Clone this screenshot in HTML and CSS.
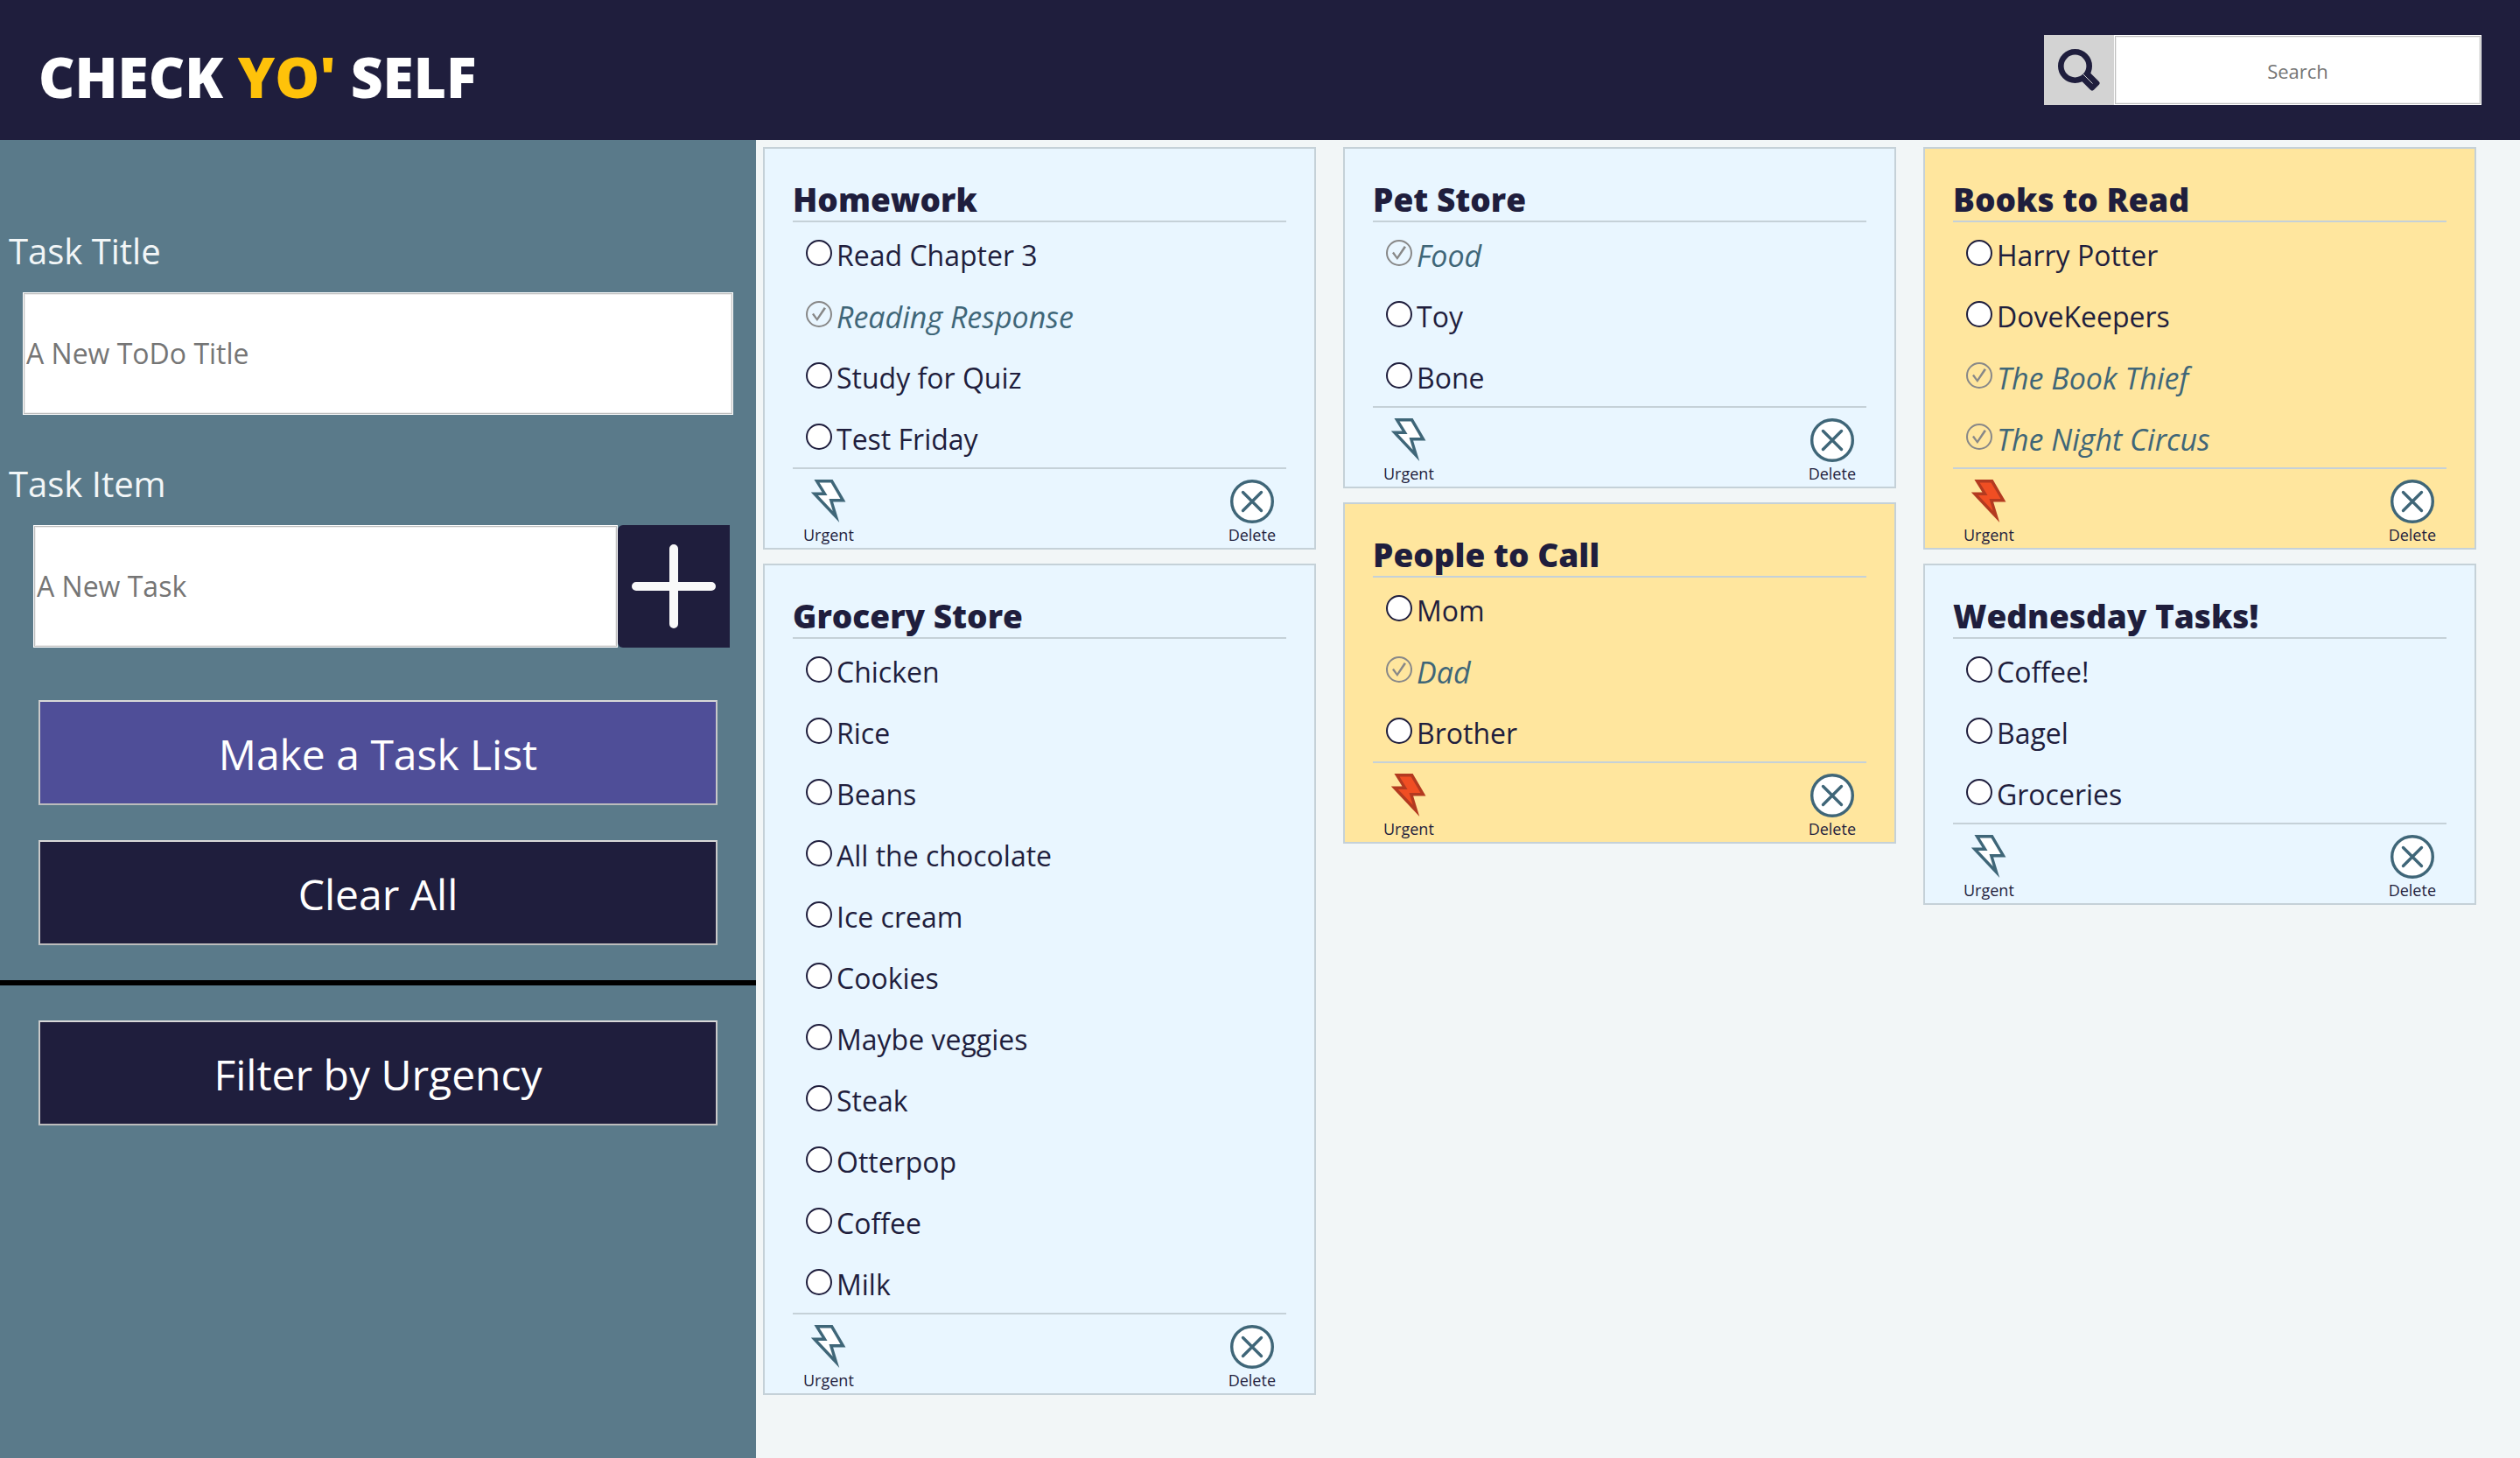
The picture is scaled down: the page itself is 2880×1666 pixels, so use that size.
FILE: index.html
```
<!DOCTYPE html>
<html lang="en">
<head>
<meta charset="utf-8">
<title>Check Yo' Self</title>
<link rel="stylesheet" href="styles.css">
</head>
<body>
<svg class="sprite" aria-hidden="true">
  <symbol id="bolt" viewBox="0 0 40 50">
    <path d="M6.5 1.8H23.6L36.5 23.8H22.8L28.5 42.5L3.8 16.2H15.5Z" stroke-miterlimit="10"/>
  </symbol>
  <symbol id="delete" viewBox="0 0 50 50">
    <circle cx="25" cy="25" r="23.3"/><path d="M14.5 14.5L35.5 35.5M35.5 14.5L14.5 35.5" stroke-linecap="round"/>
  </symbol>
</svg>
<header class="header">
  <h1 class="logo">CHECK <span class="logo-accent">YO'</span> SELF</h1>
  <form class="search">
    <button class="search-button" type="button" aria-label="Search tasks">
      <svg class="search-icon" viewBox="0 0 48 48"><circle cx="19.5" cy="19.5" r="16.2" fill="none" stroke="#1f1e3d" stroke-width="6.6"/><path d="M44.5 39L39 44.5L28 33.5L33.5 28Z" fill="#1f1e3d" stroke="#1f1e3d" stroke-width="6" stroke-linejoin="round"/><path d="M28.5 28.5L39.5 39.5" stroke="#d3d3d3" stroke-width="1"/></svg>
    </button>
    <input class="search-input" type="text" placeholder="Search" aria-label="Search">
  </form>
</header>
<div class="layout">
  <aside class="sidebar">
    <form class="task-form">
      <label class="field-label" for="task-title">Task Title</label>
      <input class="text-input title-input" id="task-title" type="text" placeholder="A New ToDo Title">
      <label class="field-label" for="task-item">Task Item</label>
      <div class="item-row">
        <input class="text-input item-input" id="task-item" type="text" placeholder="A New Task">
        <button class="add-button" type="button" aria-label="Add task">
          <svg class="plus-icon" viewBox="0 0 96 96"><path d="M48 5V91M5 48H91" stroke="#f9f9f9" stroke-width="10" stroke-linecap="round"/></svg>
        </button>
      </div>
      <button class="side-button make-button" type="button">Make a Task List</button>
      <button class="side-button" type="button">Clear All</button>
    </form>
    <div class="filter">
      <button class="side-button" type="button">Filter by Urgency</button>
    </div>
  </aside>
  <main class="board" id="board"></main>
</div>
<script src="app.js"></script>
</body>
</html>
```
FILE: styles.css
```
* {
  box-sizing: border-box;
}

body {
  margin: 0;
  min-height: 100vh;
  display: flex;
  flex-direction: column;
  background: #f2f6f7;
  color: #1f1e3d;
  font-family: "Open Sans", sans-serif;
  font-size: 32px;
}

button,
input {
  font-family: inherit;
  margin: 0;
}

.sprite {
  display: none;
}

.header {
  height: 160px;
  padding: 0 44px;
  display: flex;
  align-items: center;
  justify-content: space-between;
  background: #1f1e3d;
}

.logo {
  margin: 0;
  padding-top: 16px;
  color: #fff;
  font-size: 64px;
  font-weight: 800;
  line-height: 88px;
}

.logo-accent {
  color: #ffc20a;
}

.search {
  display: flex;
  height: 80px;
}

.search-button {
  width: 80px;
  padding: 0;
  border: 0;
  display: grid;
  place-items: center;
  background: #d3d3d3;
}

.search-icon {
  width: 48px;
  height: 48px;
}

.search-input {
  width: 420px;
  padding: 2px 3px 0;
  font-size: 22px;
  text-align: center;
}

.text-input {
  height: 140px;
  padding: 0 3px 2px;
  font-size: 32px;
}

.search-input,
.text-input {
  border: 1px solid #fff;
  outline: 1px solid #bfbfbf;
  outline-offset: -2px;
  box-shadow: inset 0 0 0 2px #eee;
  background: #fff;
}

input::placeholder {
  color: #757575;
  opacity: 1;
}

.layout {
  flex: 1;
  display: grid;
  grid-template-columns: 30% 1fr;
}

.sidebar {
  background: #5a7a8a;
}

.task-form {
  display: flex;
  flex-direction: column;
  padding: 100px 0 40px;
  border-bottom: 6px solid #000;
}

.field-label {
  padding-left: 10px;
  color: #f2f6f7;
  font-size: 40px;
  line-height: 54px;
}

.title-input {
  margin: 20px 26px 52px;
}

.item-row {
  display: flex;
  margin: 20px 30px 60px 38px;
}

.item-input {
  flex: 1;
  min-width: 0;
}

.add-button {
  width: 128px;
  padding: 0;
  border: 0;
  display: grid;
  place-items: center;
  border-radius: 6px 0 0 6px;
  background: #1f1e3d;
}

.plus-icon {
  width: 96px;
  height: 96px;
}

.side-button {
  height: 120px;
  margin: 0 44px;
  padding: 2px 0 0;
  border: 2px solid;
  border-color: #d8d8d8 #c8c8c8 #bcbcbc;
  background: #1f1e3d;
  color: #fff;
  font-size: 48px;
}

.make-button {
  margin-bottom: 40px;
  background: #4f4e98;
}

.filter {
  display: grid;
  padding-top: 40px;
}

.board {
  display: grid;
  grid-template-columns: repeat(3, 1fr);
  gap: 31px;
  align-items: start;
  padding: 8px 50px 72px 8px;
}

.column {
  display: grid;
  gap: 16px;
}

.card {
  padding: 0 32px;
  border: 2px solid #c5d1d8;
  background: #e9f6ff;
}

.card-urgent {
  background: #ffe69e;
}

.card-title {
  margin: 0;
  padding-top: 34px;
  border-bottom: 2px solid #c5d1d8;
  font-size: 37px;
  font-weight: 800;
  line-height: 48px;
}

.tasks {
  margin: 0;
  padding: 0 0 0 15px;
  list-style: none;
}

.task {
  height: 70px;
}

.task-label {
  display: flex;
  gap: 5px;
}

.task-check {
  appearance: none;
  width: 30px;
  height: 30px;
  margin: 20px 0 0;
  border: 2px solid #1f1e3d;
  border-radius: 50%;
  background: #fff;
}

.task-check:checked {
  border-color: #888;
  background: none;
  display: grid;
  place-items: center;
}

.task-check:checked::before {
  content: "";
  width: 16px;
  height: 16px;
  background: #888;
  clip-path: polygon(0 52%, 12% 42%, 36% 76%, 86% 0, 100% 9%, 37% 100%);
}

.task-text {
  padding-top: 16px;
  line-height: 44px;
}

.task-check:checked + .task-text {
  color: #3f6678;
  font-size: 34px;
  font-style: italic;
}

.card-footer {
  height: 92px;
  padding: 12px 12px 0;
  border-top: 2px solid #c5d1d8;
  display: flex;
  justify-content: space-between;
  align-items: start;
}

.card-button {
  padding: 0;
  border: 0;
  display: grid;
  justify-items: center;
  background: none;
  color: #1f1e3d;
  font-size: 18px;
  line-height: 26px;
}

.card-icon {
  height: 50px;
  fill: #fff;
  stroke: #3f6678;
  stroke-width: 3.4;
}

.icon-bolt {
  width: 40px;
}

.icon-delete {
  width: 50px;
}

.card-urgent .icon-bolt {
  fill: #f04e23;
  stroke: #b33a20;
}
```
FILE: app.js
```
const columns = [
  [
    { title: "Homework", tasks: ["Read Chapter 3", "*Reading Response", "Study for Quiz", "Test Friday"] },
    { title: "Grocery Store", tasks: ["Chicken", "Rice", "Beans", "All the chocolate", "Ice cream", "Cookies", "Maybe veggies", "Steak", "Otterpop", "Coffee", "Milk"] }
  ],
  [
    { title: "Pet Store", tasks: ["*Food", "Toy", "Bone"] },
    { title: "People to Call", urgent: true, tasks: ["Mom", "*Dad", "Brother"] }
  ],
  [
    { title: "Books to Read", urgent: true, tasks: ["Harry Potter", "DoveKeepers", "*The Book Thief", "*The Night Circus"] },
    { title: "Wednesday Tasks!", tasks: ["Coffee!", "Bagel", "Groceries"] }
  ]
];

// A leading asterisk marks a finished task.
const taskItem = (task) => {
  const done = task.startsWith("*");
  return `<li class="task"><label class="task-label"><input class="task-check" type="checkbox"${done ? " checked" : ""}><span class="task-text">${done ? task.slice(1) : task}</span></label></li>`;
};

const card = ({ title, urgent, tasks }) => `
  <article class="card${urgent ? " card-urgent" : ""}">
    <h2 class="card-title">${title}</h2>
    <ul class="tasks">${tasks.map(taskItem).join("")}</ul>
    <footer class="card-footer">
      <button class="card-button" type="button"><svg class="card-icon icon-bolt"><use href="#bolt"/></svg>Urgent</button>
      <button class="card-button" type="button"><svg class="card-icon icon-delete"><use href="#delete"/></svg>Delete</button>
    </footer>
  </article>`;

document.getElementById("board").innerHTML = columns
  .map((cards) => `<div class="column">${cards.map(card).join("")}</div>`)
  .join("");
```
